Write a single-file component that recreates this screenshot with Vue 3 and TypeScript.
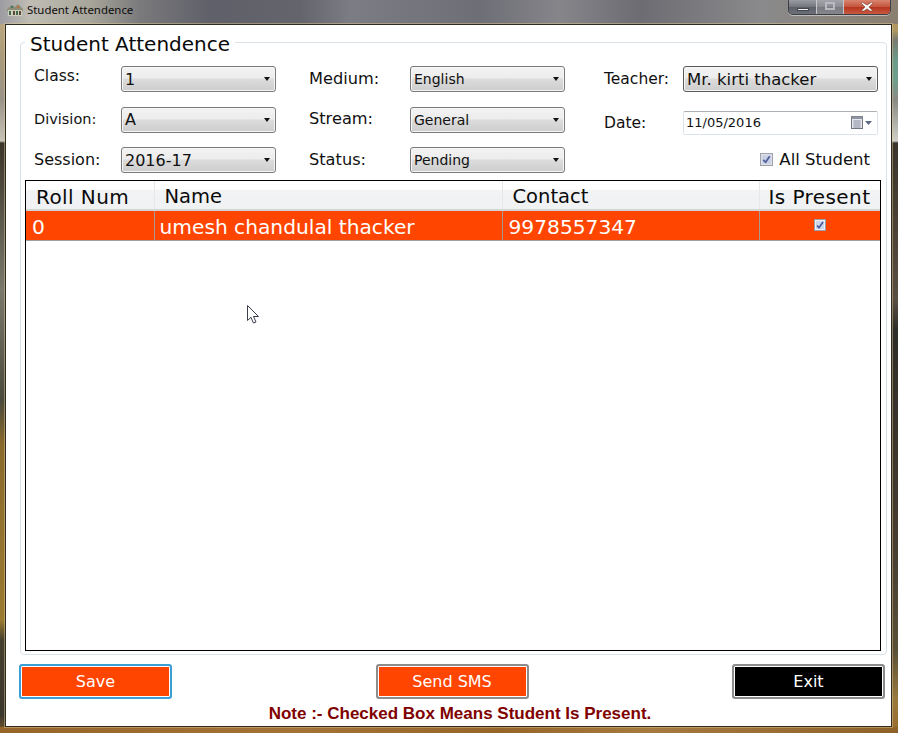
<script setup lang="ts">
interface Field {
  label: string
  value: string
  lift: string
}
const columns: Field[][] = [
  [
    { label: 'Class:', value: '1', lift: 'up3 wide' },
    { label: 'Division:', value: 'A', lift: 'up1' },
    { label: 'Session:', value: '2016-17', lift: 'up1 wider' }
  ],
  [
    { label: 'Medium:', value: 'English', lift: 'up1' },
    { label: 'Stream:', value: 'General', lift: 'up1' },
    { label: 'Status:', value: 'Pending', lift: 'up1' }
  ]
]
const rows = [{ roll: '0', name: 'umesh chandulal thacker', contact: '9978557347' }]
</script>

<template>
  <div class="desktop">
    <header class="titlebar">
      <svg class="appicon" width="16" height="16" viewBox="0 0 16 16">
        <path d="M0 7 5 3l3 2 3-3 5 5v2H0z" fill="#8c8f76" />
        <rect x="1" y="8" width="14" height="6" fill="#cfcdbb" />
        <rect x="2" y="9" width="2" height="4" fill="#3f6a4d" />
        <rect x="6" y="9" width="2" height="4" fill="#5a4a3a" />
        <rect x="9" y="9" width="2" height="4" fill="#3f6a4d" />
        <rect x="12" y="9" width="2" height="4" fill="#5a4a3a" />
        <rect x="4" y="4" width="2" height="2" fill="#3f7a5d" />
        <rect x="10" y="4" width="2" height="2" fill="#b6723f" />
      </svg>
      <span class="wintitle">Student Attendence</span>
      <div class="wincontrols">
        <span class="wc wc-min"><i></i></span>
        <span class="wc wc-max"><i></i></span>
        <span class="wc wc-close">
          <svg width="14" height="10" viewBox="0 0 14 10"><path d="M2 0 7 3l5-3 1 1-4 4 4 4h-3L7 7 4 9H1l4-4-4-4z" fill="#f4f4f4" stroke="#6a2a20" stroke-width=".5" /></svg>
        </span>
      </div>
    </header>

    <main class="client">
      <fieldset class="group">
        <legend>Student Attendence</legend>
        <div class="filters">
          <div v-for="(col, c) in columns" :key="c" class="filter-col" :class="'col' + c">
            <div v-for="f in col" :key="f.label" class="field">
              <label :class="f.lift">{{ f.label }}</label>
              <div class="combo">
                <span>{{ f.value }}</span>
                <b class="caret"></b>
              </div>
            </div>
          </div>
          <div class="filter-col col2">
            <div class="field">
              <label>Teacher:</label>
              <div class="combo combo-dark">
                <span>Mr. kirti thacker</span>
                <b class="caret"></b>
              </div>
            </div>
            <div class="field">
              <label class="down1">Date:</label>
              <div class="datebox">
                <span>11/05/2016</span>
                <svg class="cal" width="22" height="14" viewBox="0 0 22 14">
                  <rect x=".5" y=".5" width="11" height="12" fill="#e6e8ee" stroke="#6f7480" />
                  <rect x=".5" y=".5" width="11" height="2.500" fill="#8f95a3" />
                  <path d="M2 5h8M2 7h8M2 9h8M2 11h8M4 4v8M6 4v8M8 4v8" stroke="#9aa0ad" stroke-width=".8" />
                  <path d="M14 5h7l-3.500 4z" fill="#5c6a85" />
                </svg>
              </div>
            </div>
            <div class="allstudent">
              <svg class="chk" width="13" height="13" viewBox="0 0 14 14">
                <rect x=".5" y=".5" width="13" height="13" fill="#dcdfe6" stroke="#9a9da6" />
                <rect x="2.500" y="2.500" width="9" height="9" fill="#c7cfe2" />
                <path d="M3.500 7.500 6 10l4.500-6.500" fill="none" stroke="#4a5c9c" stroke-width="1.800" />
              </svg>
              <span>All Student</span>
            </div>
          </div>
        </div>

        <div class="gridwrap">
          <table class="grid">
            <colgroup>
              <col class="c-roll" />
              <col class="c-name" />
              <col class="c-contact" />
              <col />
            </colgroup>
            <thead>
              <tr>
                <th class="th-wide">Roll Num</th>
                <th>Name</th>
                <th>Contact</th>
                <th class="th-wide th-present">Is Present</th>
              </tr>
            </thead>
            <tbody>
              <tr v-for="r in rows" :key="r.roll">
                <td class="td-pad">{{ r.roll }}</td>
                <td>{{ r.name }}</td>
                <td class="td-pad">{{ r.contact }}</td>
                <td class="td-check">
                  <svg class="chk-row" width="12" height="12" viewBox="0 0 12 12">
                    <rect x=".5" y=".5" width="11" height="11" fill="#eef0f6" stroke="#9a9da6" />
                    <rect x="2" y="2" width="8" height="8" fill="#cdd5ea" />
                    <path d="M3 6.500 5 8.800 9 3" fill="none" stroke="#45589c" stroke-width="1.600" />
                  </svg>
                </td>
              </tr>
            </tbody>
          </table>
        </div>
      </fieldset>

      <div class="actions">
        <button class="btn btn-save" type="button">Save</button>
        <button class="btn" type="button">Send SMS</button>
        <button class="btn btn-exit" type="button">Exit</button>
      </div>
      <p class="note">Note :- Checked Box Means Student Is Present.</p>
    </main>

    <svg class="cursor" width="14" height="20" viewBox="0 0 14 20">
      <path d="M.5.500v15l3.500-3.200 2.400 5.700 2.600-1-2.500-5.500h5z" fill="#fff" stroke="#3a3f4a" stroke-width="1" />
    </svg>
  </div>
</template>

<style>
html,
body {
  margin: 0;
  background: #fff;
}
</style>

<style scoped>
.desktop {
  position: relative;
  width: 898px;
  height: 733px;
  overflow: hidden;
  display: flex;
  flex-direction: column;
  font-family: "DejaVu Sans", Verdana, sans-serif;
  color: #111;
  background-color: #8f6428;
  background-image:
    linear-gradient(90deg, #9c9ca2 0, #c0bdb4 30px, #a8a69a 90px, #7a7a7c 140px, #5f6069 210px, #63646c 300px, #7c7c84 350px, #6e6e76 480px, #85858a 560px, #6c6c72 640px, #8a8a8c 760px, #8a7f70 898px),
    linear-gradient(90deg, #96652a 0, #a27236 300px, #96652a 500px, #a67a3e 650px, #8e6128 898px),
    linear-gradient(180deg, #9c9ca2 0, #b9a67f 25px, #a89a7c 60px, #9a938a 100px, #c6c4b6 141px, #3a352a 143px, #7a786c 290px, #4a4a3c 400px, #8a6a2c 445px, #9a7a30 620px, #44402f 640px, #3a362c 715px, #7a5a2a 733px),
    linear-gradient(180deg, #a08050 0, #b09a60 30px, #7a7a70 40px, #6a9a88 60px, #6f9f8c 80px, #8a8a84 100px, #cfcfc8 141px, #3a3428 143px, #5a4e40 300px, #2e2c28 330px, #4a3e30 560px, #5a5038 650px, #9a7a3c 700px, #9a6a30 733px);
  background-size: 100% 24px, 100% 6px, 5px 100%, 7px 100%;
  background-position: 0 0, 0 100%, 0 0, 100% 0;
  background-repeat: no-repeat;
}

.titlebar {
  flex: none;
  height: 24px;
  display: flex;
  align-items: flex-start;
  padding: 0 7px 0 7px;
  box-sizing: border-box;
}
.appicon {
  flex: none;
  margin-top: 2px;
}
.wintitle {
  margin-left: 4px;
  line-height: 20px;
  font-family: "Noto Sans", sans-serif;
  font-size: 11.400px;
  color: #0c0c0c;
}
.wincontrols {
  margin-left: auto;
  display: flex;
  height: 15px;
  border: 1px solid #3c3f46;
  border-top: 0;
  border-radius: 0 0 5px 5px;
  overflow: hidden;
  box-sizing: border-box;
  box-shadow: 0 1px 0 rgba(255, 255, 255, 0.45);
}
.wc {
  display: flex;
  align-items: center;
  justify-content: center;
  box-sizing: border-box;
}
.wc-min {
  width: 28px;
  background: linear-gradient(#9a9ba3, #73757e 50%, #5d5f69 50%, #6c6e78);
  border-right: 1px solid #c8c8cc;
}
.wc-min i {
  width: 10px;
  height: 1px;
  margin-top: 5px;
  background: #f2f2f2;
  border: 1px solid #44464e;
}
.wc-max {
  width: 27px;
  background: linear-gradient(#a3a4aa, #8b8c92 50%, #797a81 50%, #85868c);
  border-right: 1px solid #c8c8cc;
}
.wc-max i {
  width: 6px;
  height: 4px;
  border: 2px solid #b9bac0;
  margin-top: -3px;
}
.wc-close {
  width: 46px;
  background: linear-gradient(#d9846f, #c4533c 50%, #b5331d 50%, #c85a40);
}

.client {
  flex: none;
  box-sizing: border-box;
  width: 887px;
  height: 703px;
  margin-left: 5px;
  background: #fff;
  border: 1px solid #2e2a22;
  display: flex;
  flex-direction: column;
  box-shadow: 0 0 0 1px rgba(230, 205, 150, 0.45);
}

.group {
  flex: none;
  box-sizing: border-box;
  width: 867px;
  height: 628px;
  margin: 2px 0 0 14px;
  padding: 0 5px 3px 4px;
  border: 1px solid #d9e2e8;
  border-radius: 4px;
  min-width: 0;
}
.group legend {
  margin-left: 0;
  padding: 4px 5px 0;
  font-size: 20px;
  line-height: 26px;
  color: #0a0a0a;
}

.filters {
  display: flex;
  height: 114px;
  margin-top: 9px;
}
.filter-col {
  flex: none;
  display: flex;
  flex-direction: column;
}
.col0 {
  width: 275px;
  padding-left: 9px;
}
.col1 {
  width: 295px;
}
.col2 {
  flex: 1;
}
.field {
  display: flex;
  height: 26px;
  align-items: center;
  margin-bottom: 14.500px;
}
.field label {
  flex: none;
  position: relative;
  color: #111;
}
.col0 label {
  width: 87px;
  font-size: 14.500px;
}
.col0 label.wide {
  font-size: 15.500px;
}
.col0 label.wider {
  font-size: 16px;
}
.col1 label {
  width: 101px;
  font-size: 16.200px;
}
.col2 label {
  width: 79px;
  font-size: 15.500px;
}
.up3 {
  top: -3px;
}
.up1 {
  top: -1px;
}
.down1 {
  top: 3px;
}
.combo {
  flex: none;
  box-sizing: border-box;
  width: 155px;
  height: 26px;
  padding: 0 5px 0 3px;
  display: flex;
  align-items: center;
  justify-content: space-between;
  border: 1px solid #7a7a7a;
  border-radius: 3px;
  background: linear-gradient(#f3f3f3 0, #ececec 46%, #dcdcdc 50%, #cdcdcd 100%);
  box-shadow: inset 0 0 0 1px #f6f6f6;
  color: #111;
  white-space: nowrap;
}
.col0 .combo {
  font-size: 16px;
}
.col1 .combo {
  font-size: 14px;
}
.combo-dark {
  width: 195px;
  border-color: #5a5a5a;
  font-size: 16.500px;
}
.caret {
  width: 0;
  height: 0;
  border: 3.500px solid transparent;
  border-top: 4px solid #111;
  border-bottom: 0;
}
.datebox {
  flex: none;
  position: relative;
  top: 3px;
  box-sizing: border-box;
  width: 195px;
  height: 24px;
  padding: 0 4px 0 2px;
  display: flex;
  align-items: center;
  justify-content: space-between;
  border: 1px solid #dde3ea;
  border-top-color: #aab0b6;
  border-radius: 2px;
  font-size: 13px;
}
.allstudent {
  display: flex;
  align-items: center;
  justify-content: flex-end;
  gap: 6px;
  height: 18px;
  margin-top: 3px;
  margin-right: 11px;
  font-size: 16.500px;
}

.gridwrap {
  box-sizing: border-box;
  height: 471px;
  border: 1px solid #000;
  background: #fff;
}
.grid {
  width: 100%;
  border-collapse: collapse;
  table-layout: fixed;
}
.c-roll {
  width: 128px;
}
.c-name {
  width: 348px;
}
.c-contact {
  width: 257px;
}
.grid th {
  height: 29px;
  box-sizing: border-box;
  padding: 3px 0 0 10px;
  text-align: left;
  font-weight: 400;
  font-size: 19.500px;
  color: #0a0a0a;
  background: linear-gradient(#ffffff 0, #ffffff 30%, #f2f3f5 32%, #eff1f3 100%);
  border-bottom: 2px solid #d2d4d6;
  border-right: 1px solid #e6e8ea;
}
.grid th.th-wide {
  font-size: 20px;
  letter-spacing: 0.420px;
}
.grid th:last-child {
  border-right: 0;
}
.grid th.th-present {
  padding-left: 9px;
}
.grid td {
  height: 30px;
  box-sizing: border-box;
  padding: 3px 0 0 5px;
  font-size: 20.200px;
  color: #fff;
  background: #ff4500;
  border-bottom: 1px solid #a2a09c;
  border-right: 1px solid #a89a90;
}
.grid td.td-pad {
  padding-left: 6px;
}
.grid td:last-child {
  border-right: 0;
}
.grid td.td-check {
  padding: 0;
  text-align: center;
}
.chk-row {
  display: inline-block;
  vertical-align: middle;
  margin-top: -4px;
}

.actions {
  flex: none;
  display: flex;
  justify-content: space-between;
  margin: 9px 6px 0 13px;
}
.btn {
  width: 153px;
  height: 35px;
  box-sizing: border-box;
  padding: 0;
  border: 2px solid #8c8c8c;
  border-radius: 3px;
  box-shadow: inset 0 0 0 1px #fff;
  background: #ff4500;
  color: #fff;
  font-family: inherit;
  font-size: 16px;
}
.btn-save {
  border-color: #3a9fd6;
}
.btn-exit {
  background: #000;
}
.note {
  margin: 6px 0 0 23px;
  text-align: center;
  font-family: "Liberation Sans", Arial, sans-serif;
  font-weight: 700;
  font-size: 17px;
  line-height: 18px;
  color: #800000;
}

.cursor {
  position: absolute;
  left: 247px;
  top: 305px;
}
</style>
